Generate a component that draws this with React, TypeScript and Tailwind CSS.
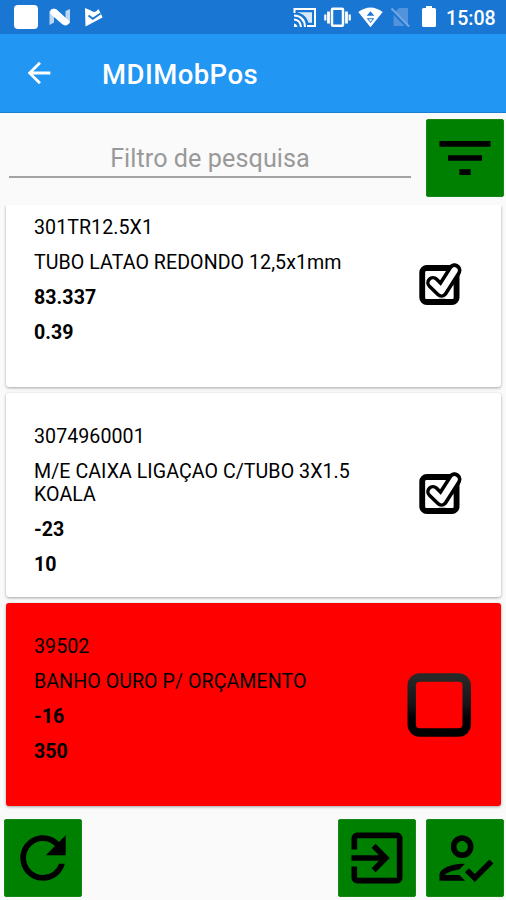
import type { ReactNode } from 'react';

function StatusBar() {
  return (
    <div className="flex h-[34px] items-center bg-[#1976d2] text-white">
      <svg className="ml-[14px] h-[34px] w-6" viewBox="14 0 24 34" fill="currentColor">
        <rect x="14" y="5" width="24" height="24" rx="4" />
      </svg>
      <svg className="ml-[11px] h-[34px] w-[22px]" viewBox="49 0 22 34" fill="currentColor">
        <path d="M49.5 11 L54 8.5 V22.5 L49.5 25Z" opacity=".7" />
        <path d="M65.5 11 L70 9 V23 L65.5 25.5Z" opacity=".7" />
        <path d="M51 9.500 C53 8.300 55.500 8.500 57.500 10.200 L69.600 21.500 C68.500 25.500 65 26.500 62.300 24.300 L50 13.500Z" />
      </svg>
      <svg className="ml-[13px] h-[34px] w-5" viewBox="84 0 20 34">
        <path d="M85 8 L91 10.5 Q93 12.8 96 11.5 L98.5 9 L102 16 L102.5 17.5 L85.5 26.5Z" fill="white" />
        <path d="M88.5 15.5 L92.8 18.8 L100.5 13.5" fill="none" stroke="#1976d2" strokeWidth="1.8" />
      </svg>
      <svg className="ml-[189px] h-[34px] w-6" viewBox="293 0 24 34" fill="none" stroke="currentColor" strokeWidth="2">
        <path d="M294.5 13 V9 H315 V26 H307" />
        <path d="M298 12.2 H312 V22.8 H308.5 C307 17.5 303.5 13.8 298 12.7Z" fill="#d8e9fb" stroke="none" />
        <path d="M294 15.5 Q304.5 16 305 27 M294 19.5 Q300.5 20 301 27" />
        <path d="M294 23.5 Q297 24 297.5 27 H294Z" fill="currentColor" stroke="none" />
      </svg>
      <svg className="ml-[7px] h-[34px] w-[27px]" viewBox="324 0 27 34" fill="none" stroke="currentColor">
        <rect x="332" y="8.8" width="11" height="17" rx="1" strokeWidth="2.5" />
        <path d="M328.5 11.5 V23.5 M346.5 11.5 V23.5" strokeWidth="2.8" />
        <path d="M325.3 14.5 V20.5 M349.7 14.5 V20.5" strokeWidth="2.200" />
      </svg>
      <svg className="ml-[7px] h-[34px] w-[25px]" viewBox="358 0 25 34">
        <path d="M358.3 12 Q370.5 3 382.7 12 L370.5 27.3Z" fill="white" />
        <path d="M370.5 11.2 L374.3 15.8 H366.7Z M366.7 18.3 H374.3 L370.5 23Z" fill="#1976d2" />
        <path d="M368.5 19.3 H372.5 L370.5 21.8Z" fill="white" />
      </svg>
      <svg className="ml-[8px] h-[34px] w-5" viewBox="391 0 20 34">
        <path d="M399 8 H408 V26 H393.5 V13.5Z" fill="#5392dc" />
        <path d="M391 10 L408.500 27.800" stroke="#1976d2" strokeWidth="3" />
        <path d="M391.5 8.5 L409 26.5" stroke="#76a8e3" strokeWidth="1.8" />
      </svg>
      <svg className="ml-[11px] h-[34px] w-[14px]" viewBox="422 0 14 34" fill="currentColor">
        <path d="M426 6 H432 V8 H434.5 Q436 8 436 9.5 V25.5 Q436 27 434.5 27 H423.5 Q422 27 422 25.5 V9.5 Q422 8 423.5 8 H426Z" />
      </svg>
      <span className="ml-[10px] mt-[3px] text-[19.6px] leading-6 font-medium">15:08</span>
    </div>
  );
}

function ActionButton({ label, path }: { label: string; path: string }) {
  return (
    <button
      aria-label={label}
      className="flex size-[78px] shrink-0 items-center justify-center rounded-[2px] border border-[#168716] bg-[#008000]"
    >
      <svg className="size-[68px] shrink-0" viewBox="0 0 24 24" fill="black">
        <path d={path} />
      </svg>
    </button>
  );
}

function CheckedBox() {
  return (
    <svg className="mt-[2px] h-[44px] w-[44px]" viewBox="418 262 44 44" fill="none" strokeLinejoin="round" strokeLinecap="round">
      <rect x="422.300" y="268" width="34.2" height="34" rx="4.500" stroke="black" strokeWidth="6" />
      <path d="M432.900 283.500 L441.500 291.500 L454.300 270.300" stroke="black" strokeWidth="14" strokeLinejoin="miter" />
      <path d="M425.500 271.200 H453.300 V298.800 H425.500Z" fill="white" />
      <path d="M432.900 282.700 L441.400 291 L454.500 270.500" stroke="black" strokeWidth="13.500" />
      <path d="M432.900 282.700 L441.400 291 L454.500 270.500" stroke="white" strokeWidth="6.500" />
    </svg>
  );
}

function EmptyBox() {
  return (
    <svg className="mr-[2px] h-[66px] w-[66px]" viewBox="0 0 66 66" fill="none">
      <defs>
        <linearGradient id="frame" x1="0" y1="0" x2="0" y2="1">
          <stop offset="0" stopColor="#282828" />
          <stop offset=".5" stopColor="#151515" />
          <stop offset=".75" stopColor="#000" />
        </linearGradient>
      </defs>
      <rect x="5.700" y="5.500" width="55" height="55" rx="8" stroke="url(#frame)" strokeWidth="8.400" />
    </svg>
  );
}

interface ItemProps {
  code: string;
  name: string;
  price: string;
  stock: string;
  className: string;
  mark: ReactNode;
}

function Item({ code, name, price, stock, className, mark }: ItemProps) {
  return (
    <section className={`flex pl-7 text-[19.6px] leading-[23px] tracking-[0.06px] text-black shadow-[0_1px_3px_rgba(0,0,0,0.35)] ${className}`}>
      <div className="flex w-[345px] shrink-0 flex-col gap-3">
        <p>{code}</p>
        <p>{name}</p>
        <p className="font-bold">{price}</p>
        <p className="font-bold">{stock}</p>
      </div>
      <div className="flex w-[122px] justify-center">{mark}</div>
    </section>
  );
}

export default function App() {
  return (
    <main className="flex h-[900px] w-[506px] flex-col overflow-hidden bg-[#fafafa] font-[Roboto,'Noto_Sans',sans-serif]">
      <StatusBar />
      <header className="flex h-[79px] items-center border-b border-[#1b7fd3] bg-[#2196f3] text-white">
        <svg className="ml-[22px] size-[34px]" viewBox="0 0 24 24" fill="currentColor">
          <path d="M20 11H7.83l5.59-5.59L12 4l-8 8 8 8 1.41-1.41L7.83 13H20v-2z" />
        </svg>
        <h1 className="ml-[46px] mt-[4px] text-[27.5px] leading-8 font-medium tracking-[0.45px]">MDIMobPos</h1>
      </header>
      <div className="flex h-[92px] shrink-0 pt-[6px] pl-[9px]">
        <div className="mr-[14.500px] flex h-[59px] w-[402px] items-center justify-center border-b-2 border-[#a3a3a3] pt-[23px] text-[25.2px] tracking-[0.06px] text-[#999]">
          Filtro de pesquisa
        </div>
        <ActionButton label="Filtrar" path="M10 18h4v-2h-4v2zM3 6v2h18V6H3zm3 7h12v-2H6v2z" />
      </div>
      <div className="flex flex-col gap-[6px] overflow-hidden pr-[5px] pb-[5px] pl-[6px]">
        <Item
          code="301TR12.5X1"
          name="TUBO LATAO REDONDO 12,5x1mm"
          price="83.337"
          stock="0.39"
          className="h-[182px] rounded-b-[3px] bg-white pt-[11px]"
          mark={<div className="pt-[44px]"><CheckedBox /></div>}
        />
        <Item
          code="3074960001"
          name="M/E CAIXA LIGAÇAO C/TUBO 3X1.5 KOALA"
          price="-23"
          stock="10"
          className="h-[204px] rounded-[3px] bg-white pt-[32px]"
          mark={<div className="pt-[44px]"><CheckedBox /></div>}
        />
        <Item
          code="39502"
          name="BANHO OURO P/ ORÇAMENTO"
          price="-16"
          stock="350"
          className="h-[203px] rounded-[3px] bg-[#ff0000] pt-[32px]"
          mark={<div className="pt-[37px]"><EmptyBox /></div>}
        />
      </div>
      <footer className="mt-[8px] flex pr-[2.500px] pl-[4px]">
        <ActionButton
          label="Atualizar"
          path="M17.65 6.35A7.958 7.958 0 0 0 12 4c-4.42 0-7.99 3.58-7.99 8s3.57 8 7.99 8c3.73 0 6.84-2.55 7.73-6h-2.08A5.99 5.99 0 0 1 12 18c-3.31 0-6-2.69-6-6s2.69-6 6-6c1.66 0 3.14.69 4.22 1.78L13 11h7V4l-2.35 2.35z"
        />
        <div className="ml-auto flex gap-[9.500px]">
          <ActionButton
            label="Sair"
            path="M10.09 15.59L11.5 17l5-5-5-5-1.41 1.41L12.67 11H3v2h9.67l-2.58 2.59zM19 3H5a2 2 0 0 0-2 2v4h2V5h14v14H5v-4H3v4a2 2 0 0 0 2 2h14c1.1 0 2-.9 2-2V5c0-1.100-.9-2-2-2z"
          />
          <ActionButton
            label="Confirmar cliente"
            path="M11 12c2.210 0 4-1.790 4-4s-1.790-4-4-4-4 1.790-4 4 1.790 4 4 4zm0-6c1.100 0 2 .9 2 2s-.9 2-2 2-2-.9-2-2 .9-2 2-2zm-6 12c.2-.63 2.570-1.680 4.960-1.940l2.040-2c-.39-.04-.68-.06-1-.06-2.670 0-8 1.340-8 4v2h9l-2-2H5zm15.600-5.500l-5.130 5.170-2.070-2.080L12 17l3.470 3.500L22 13.910z"
          />
        </div>
      </footer>
    </main>
  );
}
